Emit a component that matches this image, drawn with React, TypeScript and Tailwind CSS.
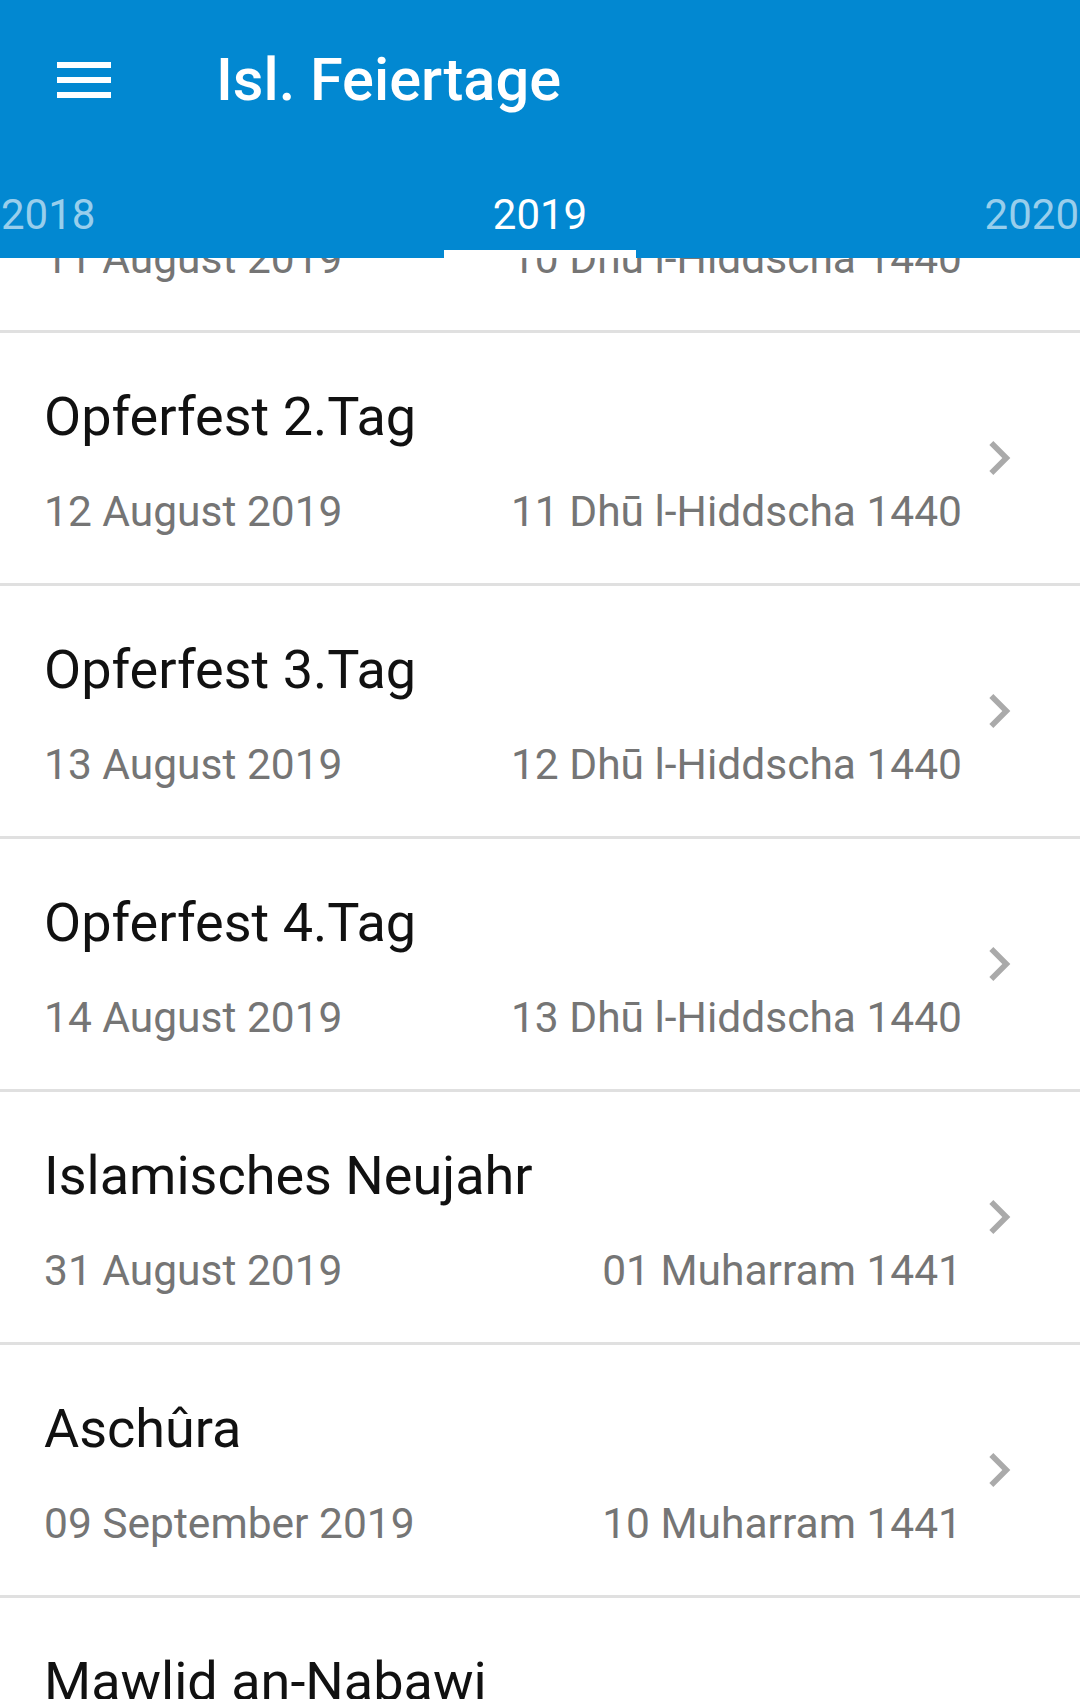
import React from "react";

type Holiday = {
  name: string;
  date: string;
  hijri: string;
};

const holidays: Holiday[] = [
  { name: "Opferfest 1.Tag", date: "11 August 2019", hijri: "10 Dhū l-Hiddscha 1440" },
  { name: "Opferfest 2.Tag", date: "12 August 2019", hijri: "11 Dhū l-Hiddscha 1440" },
  { name: "Opferfest 3.Tag", date: "13 August 2019", hijri: "12 Dhū l-Hiddscha 1440" },
  { name: "Opferfest 4.Tag", date: "14 August 2019", hijri: "13 Dhū l-Hiddscha 1440" },
  { name: "Islamisches Neujahr", date: "31 August 2019", hijri: "01 Muharram 1441" },
  { name: "Aschûra", date: "09 September 2019", hijri: "10 Muharram 1441" },
  { name: "Mawlid an-Nabawi", date: "09 November 2019", hijri: "12 Rabi' al-awwal 1441" },
];

const MenuIcon = () => (
  <svg width="54" height="36" viewBox="0 0 54 36" className="shrink-0">
    <rect x="0" y="0" width="54" height="6" fill="#fff" />
    <rect x="0" y="15" width="54" height="6" fill="#fff" />
    <rect x="0" y="30" width="54" height="6" fill="#fff" />
  </svg>
);

const Chevron = () => (
  <svg viewBox="0 0 24 24" className="ml-[3px] h-[68px] w-[68px] shrink-0">
    <path d="M10 6L8.59 7.41 13.17 12l-4.58 4.59L10 18l6-6z" fill="#aaaaaa" />
  </svg>
);

const HolidayRow = ({ item }: { item: Holiday }) => (
  <div className="flex items-center border-b-[3px] border-[#e0e0e0] pl-[44px] pr-[47px]">
    <div className="flex-1 pt-[52px] pb-[45px]">
      <div className="text-[54px] leading-[64px] text-[#111] whitespace-nowrap">{item.name}</div>
      <div className="mt-[37px] flex justify-between text-[42.5px] leading-[52px] text-[#757575] whitespace-nowrap">
        <span>{item.date}</span>
        <span>{item.hijri}</span>
      </div>
    </div>
    <Chevron />
  </div>
);

const App = () => {
  return (
    <div
      className="relative h-[1699px] w-full overflow-hidden bg-white"
      style={{ fontFamily: "Roboto, 'Noto Sans', sans-serif" }}
    >
      <header className="absolute inset-x-0 top-0 z-10 bg-[#0288d1]">
        <div className="flex h-[160px] items-center">
          <div className="ml-[57px]">
            <MenuIcon />
          </div>
          <h1 className="ml-[105px] text-[59.5px] font-medium leading-[70px] text-white">
            Isl. Feiertage
          </h1>
        </div>
        <nav className="flex h-[98px] items-end justify-between px-[1px] text-[42px]">
          <span className="mb-[18px] leading-[50px] text-white/60">2018</span>
          <div className="flex flex-col items-center">
            <span className="leading-[50px] text-white">2019</span>
            <div className="mt-[10px] h-[8px] w-[192px] bg-white" />
          </div>
          <span className="mb-[18px] leading-[50px] text-white/60">2020</span>
        </nav>
      </header>

      <main className="pt-[80px]">
        {holidays.map((h) => (
          <HolidayRow key={h.name} item={h} />
        ))}
      </main>
    </div>
  );
};

export default App;
